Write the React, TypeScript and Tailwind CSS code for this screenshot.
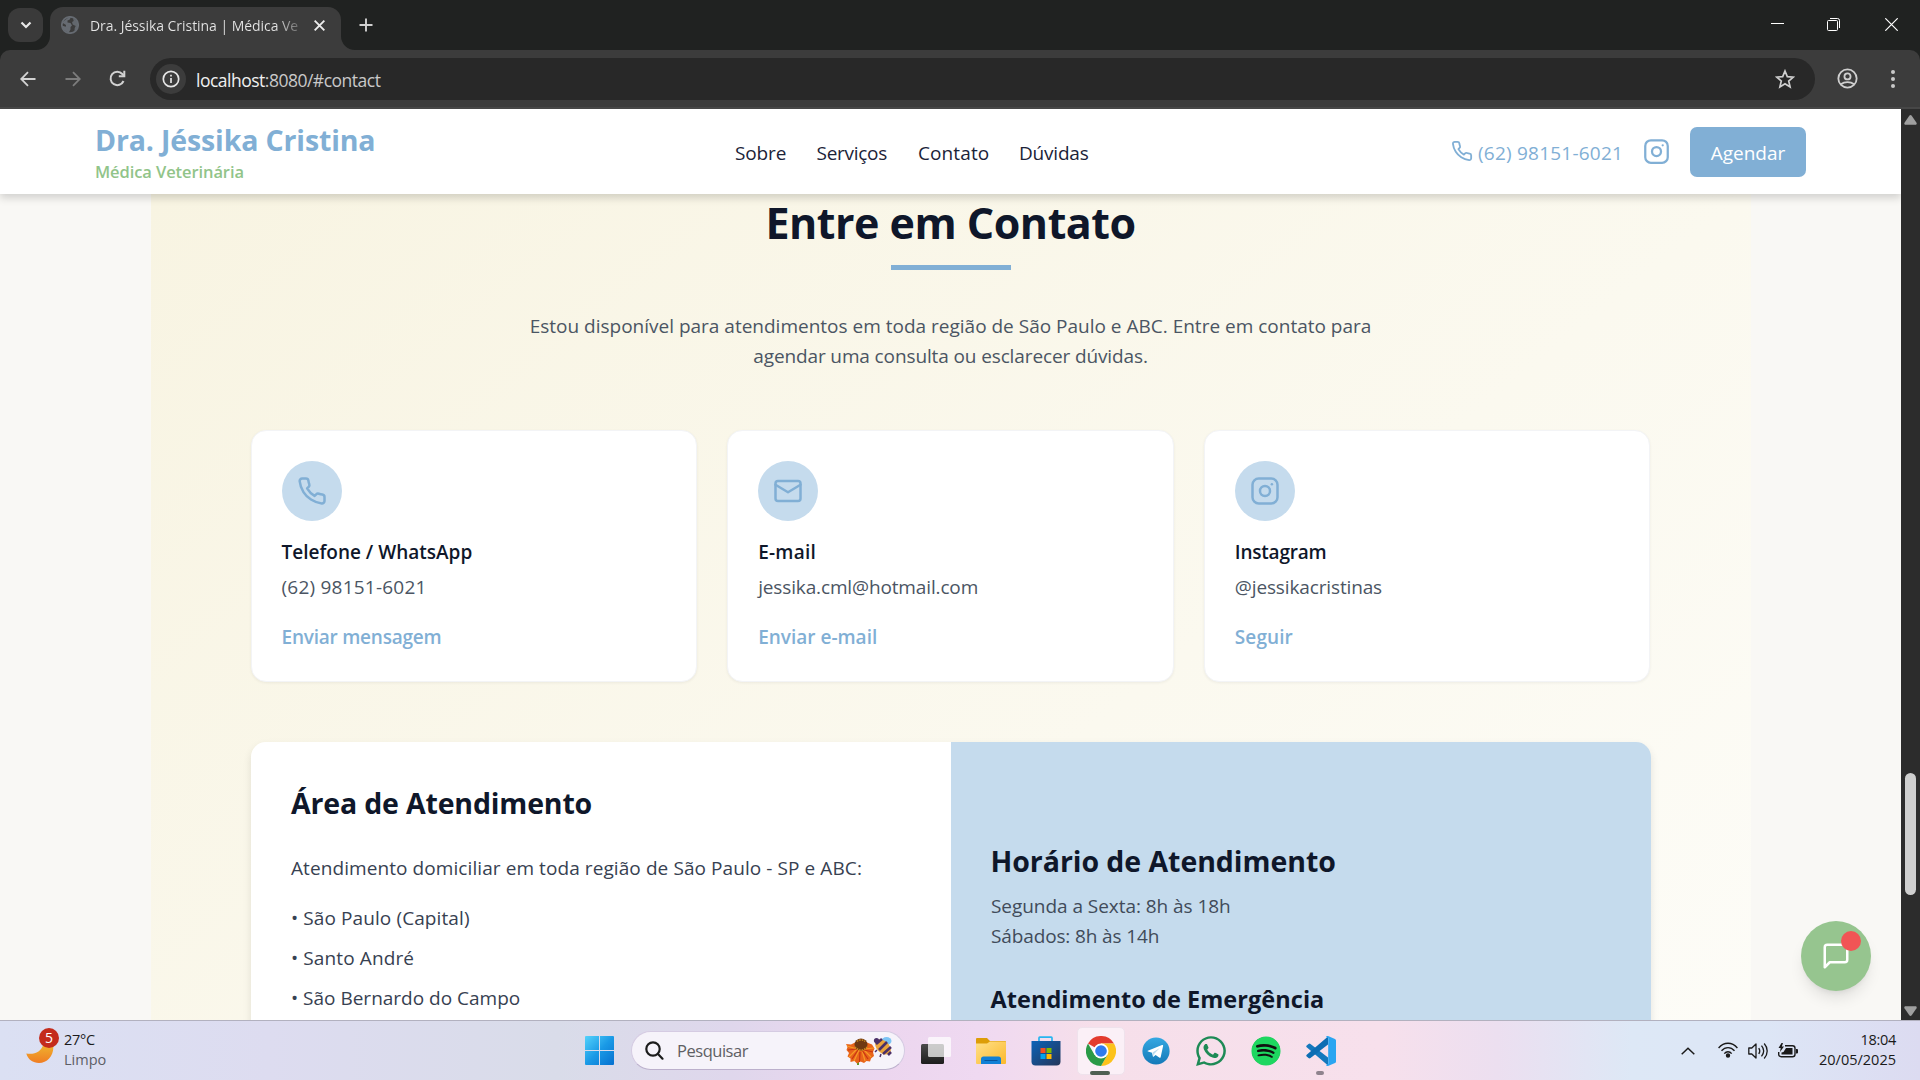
import type { ReactNode } from "react";
import { FaWhatsapp, FaSpotify } from "react-icons/fa";

type IconProps = { className?: string; stroke?: number };

function Line({ className = "", stroke = 2, children }: IconProps & { children: ReactNode }) {
  return (
    <svg viewBox="0 0 24 24" fill="none" stroke="currentColor" strokeWidth={stroke} strokeLinecap="round" strokeLinejoin="round" className={className}>
      {children}
    </svg>
  );
}

const Phone = (p: IconProps) => (
  <Line {...p}>
    <path d="M22 16.92v3a2 2 0 0 1-2.18 2 19.79 19.79 0 0 1-8.63-3.07 19.5 19.5 0 0 1-6-6 19.79 19.79 0 0 1-3.07-8.67A2 2 0 0 1 4.11 2h3a2 2 0 0 1 2 1.72 12.84 12.84 0 0 0 .7 2.81 2 2 0 0 1-.45 2.11L8.09 9.91a16 16 0 0 0 6 6l1.27-1.27a2 2 0 0 1 2.11-.45 12.84 12.84 0 0 0 2.81.7A2 2 0 0 1 22 16.92z" />
  </Line>
);
const Mail = (p: IconProps) => (
  <Line {...p}>
    <rect x="2" y="4" width="20" height="16" rx="2" />
    <path d="m2 7 10 6 10-6" />
  </Line>
);
const Instagram = (p: IconProps) => (
  <Line {...p}>
    <rect x="2" y="2" width="20" height="20" rx="5" />
    <circle cx="12" cy="12" r="4" />
    <path d="M17.5 6.5h.01" />
  </Line>
);
const Message = (p: IconProps) => (
  <Line {...p}>
    <path d="M21 15a2 2 0 0 1-2 2H7l-4 4V5a2 2 0 0 1 2-2h14a2 2 0 0 1 2 2z" />
  </Line>
);

function TabStrip() {
  return (
    <div className="flex h-[50px] bg-[#202221] pl-2">
      <div className="mt-2 flex h-[34px] w-[35px] items-center justify-center rounded-xl bg-[#3a3a3a]">
        <svg viewBox="0 0 12 8" className="h-[8px] w-[12px]" fill="none" stroke="#e8e8e8" strokeWidth="2.2"><path d="M1.5 1.5 6 6l4.500-4.500" /></svg>
      </div>
      <div className="relative ml-[7px] mt-[7px] flex h-[43px] w-[291px] items-center rounded-t-[13px] bg-[#3c3c3c] pb-[7px] pl-[11px]">
        <svg viewBox="0 0 14 14" className="absolute bottom-0 left-[-14px] size-[14px]"><path d="M14 0A14 14 0 0 1 0 14h14z" fill="#3c3c3c" /></svg>
        <svg viewBox="0 0 14 14" className="absolute bottom-0 right-[-14px] size-[14px]"><path d="M0 0a14 14 0 0 0 14 14H0z" fill="#3c3c3c" /></svg>
        <svg viewBox="0 0 18 18" className="size-[18px]">
          <circle cx="9" cy="9" r="8.2" fill="#3c3c3c" stroke="#666b72" strokeWidth="1.700" />
          <path d="M1 6.500 8 1l2 .3-1.500 2.500-2 .7 0 2 3 .5 1.500 2.500-1.500 1.500v2.500L7.500 17 2 13.500.8 9.500l4 1.200.2-1.700z" fill="#666b72" />
          <path d="M12 2.200c3 1.300 5 3.800 5 6.800 0 2.500-1.300 4.800-3.500 6.500l.2-3.500 1-2-3-1.500-.7-2.500 1.700-1z" fill="#666b72" opacity=".9" />
        </svg>
        <div className="ml-[11px] mt-[2px] w-[211px] overflow-hidden whitespace-nowrap bg-linear-to-r from-[#e6e6e6] from-88% to-[#e6e6e6]/20 bg-clip-text text-[14px] leading-5 tracking-[-0.05px] text-transparent">Dra. Jéssika Cristina | Médica Ve</div>
        <svg viewBox="0 0 10 10" className="ml-[13px] size-[11px]" stroke="#ececec" strokeWidth="1.700"><path d="m.6.6 8.800 8.800M9.400.6.6 9.400" /></svg>
      </div>
      <svg viewBox="0 0 14 14" className="ml-[18px] mt-[18px] size-[14px]" stroke="#d0d0d0" strokeWidth="1.900"><path d="M7 .5v13M.5 7h13" /></svg>
      <div className="ml-auto mr-[22px] mt-[18px] flex h-[13px] gap-[43px] text-white">
        <svg viewBox="0 0 13 13" className="size-[13px]" stroke="currentColor" shapeRendering="crispEdges"><path d="M0 5.500h13" /></svg>
        <svg viewBox="0 0 13 13" className="size-[13px]" fill="none" stroke="currentColor"><rect x=".5" y="2.500" width="10" height="10" rx="1" /><path d="M3 .5h7.500a2 2 0 0 1 2 2V10" /></svg>
        <svg viewBox="0 0 13 13" className="ml-[2px] size-[13px]" stroke="currentColor" strokeWidth="1.200"><path d="m.3.3 12.400 12.400M12.700.3.3 12.700" /></svg>
      </div>
    </div>
  );
}

function Toolbar() {
  return (
    <div className="bg-[#202221]">
      <div className="flex h-[59px] items-center rounded-t-[10px] border-b-2 border-[#474747] bg-[#3c3c3c] pl-[20px]">
        <svg viewBox="0 0 16 16" className="size-[16px]" fill="none" stroke="#d2d2d2" strokeWidth="1.800"><path d="M15.500 8H1.500M8 1.200 1.200 8 8 14.800" /></svg>
        <svg viewBox="0 0 16 16" className="ml-[29px] size-[16px]" fill="none" stroke="#7c7c7c" strokeWidth="1.800"><path d="M.5 8h14M8 1.200 14.800 8 8 14.800" /></svg>
        <svg viewBox="0 0 17 17" className="ml-[28px] size-[17px]" fill="none" stroke="#d2d2d2" strokeWidth="2"><path d="M14.500 11A6.700 6.700 0 1 1 13.300 4L15 5.900" /><path d="M15.300.8v5.400H9.800" /></svg>
        <div className="ml-[24px] flex h-[42px] w-[1665px] items-center rounded-full bg-[#282828] pl-[6px]">
          <div className="flex size-[30px] items-center justify-center rounded-full bg-[#3c3c3c]">
            <svg viewBox="0 0 18 18" className="size-[18px]" fill="none" stroke="#e6e6e6" strokeWidth="1.700"><circle cx="9" cy="9" r="7.700" /><path d="M9 8v5M9 4.700v1.900" /></svg>
          </div>
          <div className="ml-[10px] mt-[2px] text-[17.5px] leading-6 tracking-[-0.5px] text-[#c9c9c9]"><span className="text-[#f0f0f0]">localhost</span><span>:8080/#contact</span></div>
          <svg viewBox="0 0 20 20" className="ml-auto mr-[20px] size-[20px]" fill="none" stroke="#cfcfcf" strokeWidth="1.700"><path d="m10 2 2.300 5.600 6 .5-4.600 3.900 1.400 5.900L10 14.800l-5.100 3.100L6.300 12 1.700 8.100l6-.5z" /></svg>
        </div>
        <svg viewBox="0 0 22 22" className="ml-[22px] size-[21px]" fill="none" stroke="#cfcfcf" strokeWidth="1.900"><circle cx="11" cy="11" r="9.600" /><circle cx="11" cy="8.800" r="3.200" /><path d="M4 17c4-3 10-3 14 0" /></svg>
        <div className="ml-[33px] flex flex-col gap-[3px]">
          <i className="size-1 rounded-full bg-[#c9c9c9]" /><i className="size-1 rounded-full bg-[#c9c9c9]" /><i className="size-1 rounded-full bg-[#c9c9c9]" />
        </div>
      </div>
    </div>
  );
}

function Header() {
  return (
    <header className="relative z-10 flex h-[85px] shrink-0 items-center justify-between bg-white pl-[95px] pr-[95px] shadow-[0_4px_8px_rgba(0,0,0,0.16)]">
      <div className="w-[279px] whitespace-nowrap">
        <div className="mt-[5px] text-[28.5px] font-bold leading-9 tracking-[-0.142px] text-[#81afd5]">Dra. Jéssika Cristina</div>
        <div className="text-[16.500px] font-semibold leading-[28px] tracking-[-0.091px] text-[#91c489]">Médica Veterinária</div>
      </div>
      <nav className="mt-[2px] flex gap-[30px] whitespace-nowrap text-[19px] leading-[30px] text-[#1b2338]">
        <a className="w-[51px] tracking-[-0.13px]">Sobre</a>
        <a className="w-[72px] pl-[0.500px] tracking-[-0.28px]">Serviços</a>
        <a className="w-[71px] tracking-[0.100px]">Contato</a>
        <a className="w-[71px] tracking-[-0.2px]">Dúvidas</a>
      </nav>
      <div className="flex items-center whitespace-nowrap text-[#81afd5]">
        <Phone className="mt-[-2px] size-[22px]" />
        <span className="ml-[5px] mt-[2px] w-[144px] text-[19px] leading-[30px] tracking-[0.22px]">(62) 98151-6021</span>
        <Instagram className="ml-[21px] size-[27px]" />
        <button className="ml-[20px] h-[50px] w-[116px] rounded-[7px] bg-[#81afd5] pt-[3px] text-[19px] leading-[30px] text-white">Agendar</button>
      </div>
    </header>
  );
}

const cards = [
  { icon: Phone, title: "Telefone / WhatsApp", value: "(62) 98151-6021", link: "Enviar mensagem", tracking: ["", "tracking-[0.22px]", "tracking-[-0.227px]"] },
  { icon: Mail, title: "E-mail", value: "jessika.cml@hotmail.com", link: "Enviar e-mail", tracking: ["tracking-[0.227px]", "tracking-[-0.138px]", ""] },
  { icon: Instagram, title: "Instagram", value: "@jessikacristinas", link: "Seguir", tracking: ["tracking-[-0.213px]", "tracking-[-0.134px]", "tracking-[0.082px]"] },
];

function Contact() {
  return (
    <section className="mx-auto h-[1300px] w-[1600px] shrink-0 bg-linear-to-br from-[#f8f4e2] to-[#fefefc] px-[100px] pt-[4px] whitespace-nowrap">
      <h2 className="text-center text-[43px] font-bold leading-[50px] tracking-[-0.500px] text-[#0f172a]">Entre em Contato</h2>
      <div className="mx-auto mt-[17px] h-[5px] w-[120px] bg-[#81afd5]" />
      <p className="mt-[41px] text-center text-[19px] leading-[30px] text-[#4b5563]">
        <span className="block">Estou disponível para atendimentos em toda região de São Paulo e ABC. Entre em contato para</span>
        <span className="block tracking-[-0.12px]">agendar uma consulta ou esclarecer dúvidas.</span>
      </p>
      <div className="mt-[59px] grid grid-cols-3 gap-[30px]">
        {cards.map(({ icon: Icon, title, value, link, tracking }) => (
          <article key={title} className="h-[252px] rounded-[15px] border border-[#f3f4f6] bg-white p-[30px] shadow-[0_1px_3px_rgba(0,0,0,0.06)]">
            <div className="flex size-[60px] items-center justify-center rounded-full bg-[#c5dbed] text-[#81afd5]"><Icon className="size-[30px]" /></div>
            <h3 className={`mt-[16px] text-[19px] font-semibold leading-[30px] text-[#0f172a] ${tracking[0]}`}>{title}</h3>
            <p className={`mt-[5px] text-[19px] leading-[30px] text-[#4b5563] ${tracking[1]}`}>{value}</p>
            <a className={`mt-[20px] block text-[19px] font-semibold leading-[30px] text-[#81afd5] ${tracking[2]}`}>{link}</a>
          </article>
        ))}
      </div>
      <div className="mt-[60px] grid h-[560px] grid-cols-2 overflow-hidden rounded-[15px] shadow-[0_4px_8px_rgba(0,0,0,0.1)]">
        <div className="bg-white pl-[40.5px] pt-[41px] text-[19px] leading-[30px] text-[#374151]">
          <h3 className="text-[28.5px] font-bold leading-10 tracking-[-0.167px] text-[#0f172a]">Área de Atendimento</h3>
          <p className="mt-[30px] tracking-[0.083px]">Atendimento domiciliar em toda região de São Paulo - SP e ABC:</p>
          <ul className="mt-[20px] flex flex-col gap-[10px]">
            <li className="tracking-[0.100px]">• São Paulo (Capital)</li>
            <li className="tracking-[0.12px]">• Santo André</li>
            <li>• São Bernardo do Campo</li>
          </ul>
        </div>
        <div className="bg-[#c5dbed] px-[40px] pt-[99px] text-[19px] leading-[30px] text-[#414b5a]">
          <h3 className="text-[28.5px] font-bold leading-10 tracking-[-0.054px] text-[#0f172a]">Horário de Atendimento</h3>
          <p className="mt-[10px] pl-[0.500px] tracking-[-0.053px]">Segunda a Sexta: 8h às 18h</p>
          <p className="pl-[0.500px] tracking-[-0.13px]">Sábados: 8h às 14h</p>
          <h4 className="mt-[33px] text-[23.5px] font-bold tracking-[0.043px] text-[#0f172a]">Atendimento de Emergência</h4>
        </div>
      </div>
    </section>
  );
}

function Scrollbar() {
  return (
    <div className="flex w-[19px] flex-col items-center bg-[#2c2c2c]">
      <svg viewBox="0 0 13 10" className="mt-[6px] h-[10px] w-[13px]" fill="#9f9f9f"><path d="M5.300.8a1.500 1.500 0 0 1 2.400 0l4.800 7c.6 1-.1 2-1.200 2H1.700c-1.100 0-1.800-1-1.200-2z" /></svg>
      <div className="mt-[648px] h-[122px] w-[11px] rounded-full bg-[#cfcfcf]" />
      <svg viewBox="0 0 13 10" className="mt-auto mb-[4px] h-[10px] w-[13px] rotate-180" fill="#9f9f9f"><path d="M5.300.8a1.500 1.500 0 0 1 2.400 0l4.800 7c.6 1-.1 2-1.200 2H1.700c-1.100 0-1.800-1-1.200-2z" /></svg>
    </div>
  );
}

function Flower() {
  return (
    <svg viewBox="0 0 48 30" className="h-[30px] w-[48px]">
      <path d="M13 20v9" stroke="#5d9a2c" strokeWidth="2" />
      <path d="M1 8l5 .5 4-2h12l5 2 2.500 4-1.500 3.500 1 4-3 2.500-1 3-3.500-.5-2.500 2-3.500-1.500-3.500 2-2.500-2.500-4 1 0-3.500-3-2 1.500-3.500-2.500-3 1-3z" fill="#e8641a" />
      <path d="M2 10l10 3M4 21l8-8M9 25l5-11M20 25l-3-11M26 21l-8-8M29 12l-10 1" stroke="#f79a26" strokeWidth="1.200" />
      <path d="M3 14l9-1M7 23l6-9M23 23l-6-9M28 16l-9-2M14.500 26l.5-10" stroke="#c93512" strokeWidth="1.200" />
      <ellipse cx="16" cy="8.500" rx="6.500" ry="6" fill="#6f3812" />
      <path d="M10 11c3 4 9 4 12 0M12 5.500c2-2 6-2 8 0" fill="none" stroke="#c88a1f" strokeWidth="1.500" strokeDasharray="1.500 1" />
      <ellipse cx="41.500" cy="5" rx="5" ry="4" fill="#7cc4f4" />
      <ellipse cx="38" cy="11" rx="9" ry="6" transform="rotate(42 38 11)" fill="#eba43c" />
      <path d="m31 8 6-5M34 14l8-8M38 18l8-7M43 19l3-3" stroke="#4b3068" strokeWidth="2.600" />
      <circle cx="31.500" cy="4.500" r="2.600" fill="#4b3068" />
      <path d="m32 14-2 2M36 18l-1 3" stroke="#4b3068" strokeWidth="1.500" />
    </svg>
  );
}

function Slot({ children, mark }: { children: ReactNode; mark?: string }) {
  return (
    <div className="relative flex h-full w-[55px] items-center justify-center">
      {children}
      {mark && <i className={mark} />}
    </div>
  );
}

function Taskbar() {
  return (
    <div className="flex h-[60px] items-center border-t border-[#b2b1bf] bg-[linear-gradient(90deg,#dbe0f3_0%,#dddcf0_14%,#d9dce9_29%,#dfd7ec_38%,#ecd6ef_46%,#efd9f1_51%,#f6dfea_57%,#f7e0ec_72%,#ecdff0_78%,#dde8f6_85%,#dde6f6_92%,#dcdbf1_100%)]">
      <div className="relative ml-[26px] h-[40px] w-[28px]">
        <svg viewBox="0 0 28 20" className="mt-[13px] h-[20px] w-[28px]">
          <defs><linearGradient id="moon" x1="0" y1="0" x2="0" y2="1"><stop offset="0" stopColor="#efb52f" /><stop offset="1" stopColor="#f07d23" /></linearGradient></defs>
          <path d="M.3 9.500C8 11 15.500 8 17.500 0L27 0c2 10-5 19-14 19C7 19 2 15.500.3 9.500z" fill="url(#moon)" />
        </svg>
        <div className="absolute left-[13px] top-[-3px] flex size-[20px] items-center justify-center rounded-full bg-[#c42b1c] text-[14px] leading-5 text-white">5</div>
      </div>
      <div className="mt-[-1px] ml-[10px] w-[60px] text-[14.500px] leading-5">
        <div className="tracking-[-0.26px] text-[#1b1b1b]">27°C</div>
        <div className="text-[#5d5e66]">Limpo</div>
      </div>
      <svg viewBox="0 0 29 29" className="ml-[461px] size-[29px]">
        <defs><linearGradient id="win" x1="0" y1="0" x2="1" y2="1"><stop offset="0" stopColor="#54d2fb" /><stop offset=".5" stopColor="#1a9ae6" /><stop offset="1" stopColor="#0670cf" /></linearGradient></defs>
        <path d="M1 0h13v14H0V1q0-1 1-1zM15 0h13q1 0 1 1v13H15zM0 15h14v14H1q-1 0-1-1zM15 15h14v13q0 1-1 1H15z" fill="url(#win)" />
      </svg>
      <div className="ml-[17px] flex h-[39px] w-[274px] items-center rounded-full border border-b-[#bcb0cc] border-x-[#d5cbe2] border-t-[#d5cbe2] bg-[#f6f3fa] pl-[13px]">
        <svg viewBox="0 0 19 19" className="size-[19px]" fill="none" stroke="#1c1c1c" strokeWidth="2.200" strokeLinecap="round"><circle cx="8" cy="8" r="6.700" /><path d="m13 13 4.500 4.700" /></svg>
        <div className="ml-[13px] mt-px w-[75px] text-[16.500px] leading-6 tracking-[-0.47px] text-[#5f5f64]">Pesquisar</div>
        <div className="ml-auto mr-[11px]"><Flower /></div>
      </div>
      <div className="ml-[3px] flex h-full">
        <Slot>
          <svg viewBox="0 0 30 30" className="size-[30px]">
            <defs><linearGradient id="tv" x1="0" y1="0" x2="0" y2="1"><stop offset="0" stopColor="#4a4a4a" /><stop offset="1" stopColor="#1d1d1d" /></linearGradient></defs>
            <rect x="0" y="8" width="23" height="20" rx="1.500" fill="url(#tv)" />
            <rect x="7" y="1" width="23" height="20" rx="1.500" fill="#fff" opacity=".72" />
          </svg>
        </Slot>
        <Slot>
          <svg viewBox="0 0 30 30" className="size-[30px]">
            <defs><linearGradient id="fold" x1="0" y1="0" x2="1" y2="1"><stop offset="0" stopColor="#ffe08a" /><stop offset="1" stopColor="#fbb92c" /></linearGradient></defs>
            <path d="M0 3q0-1 1-1h10l3 3h15q1 0 1 1v6H0z" fill="#dd9d08" />
            <path d="M0 7.500h11l3-2h15q1 0 1 1V27q0 1-1 1H1q-1 0-1-1z" fill="url(#fold)" />
            <path d="M5 28v-5q0-2.500 2.500-2.500h15Q25 20.500 25 23v5z" fill="#1180d6" /><path d="M8.500 24.500h13" stroke="#07549b" />
          </svg>
        </Slot>
        <Slot>
          <svg viewBox="0 0 30 30" className="size-[30px]">
            <defs><linearGradient id="store" x1="0" y1="0" x2="1" y2="1"><stop offset="0" stopColor="#0b62b8" /><stop offset="1" stopColor="#253659" /></linearGradient></defs>
            <path d="M8 6V2q0-.8.8-.8h11.400q.8 0 .8.800v4" fill="none" stroke="#27b5f0" strokeWidth="1.700" />
            <path d="M.5 5h29v20.500q0 4-4 4h-21q-4 0-4-4z" fill="url(#store)" />
            <path d="M9.500 12H14.500v5h-5z" fill="#f25022" /><path d="M15.500 12h5v5h-5z" fill="#7fba00" /><path d="M9.500 18h5v5h-5z" fill="#00a4ef" /><path d="M15.500 18h5v5h-5z" fill="#ffb900" />
          </svg>
        </Slot>
        <Slot mark="absolute bottom-[5px] left-[17px] h-1 w-[20px] rounded-full bg-[#4f5f52]">
          <div className="flex h-[48px] w-[48px] items-center justify-center rounded-[5px] border border-[#efe2ec] bg-[#fbf0f7]">
            <svg viewBox="0 0 48 48" className="size-[30px]">
              <path d="M24 24 3.200 12A24 24 0 0 1 44.800 12H24z" fill="#e33b2e" />
              <path d="M24 12h20.800A24 24 0 0 1 24 48L34.400 30z" fill="#fcc21b" />
              <path d="M34.400 30 24 48A24 24 0 0 1 3.200 12l10.400 18z" fill="#2a9a47" />
              <circle cx="24" cy="24" r="12" fill="#fff" /><circle cx="24" cy="24" r="9.300" fill="#2f7bee" />
            </svg>
          </div>
        </Slot>
        <Slot>
          <svg viewBox="0 0 28 28" className="size-[28px]">
            <defs><linearGradient id="tg" x1="0" y1="0" x2="0" y2="1"><stop offset="0" stopColor="#35a8e2" /><stop offset="1" stopColor="#1479b8" /></linearGradient></defs>
            <circle cx="14" cy="14" r="13.600" fill="url(#tg)" />
            <path d="M5.800 13.800 20 8c.8-.3 1.300.2 1.100 1l-2.400 11c-.2.900-.8 1.100-1.500.6l-3.600-2.700-1.800 1.700c-.4.400-.8.300-.9-.2l-.9-3.600-3.900-1.200c-.8-.2-.8-.6-.3-.8z" fill="#fff" /><path d="m10.500 15.500 7.300-4.600-5.500 5.800-.4 2.600z" fill="#b9dbee" />
          </svg>
        </Slot>
        <Slot><FaWhatsapp className="size-[34px] text-[#1d8a55]" /></Slot>
        <Slot>
          <div className="flex size-[28px] items-center justify-center rounded-full bg-[#111]"><FaSpotify className="size-[30px] shrink-0 text-[#1ed760]" /></div>
        </Slot>
        <Slot mark="absolute bottom-[5px] left-[23px] h-1 w-2 rounded-full bg-[#8f838e]">
          <svg viewBox="0 0 30 30" className="size-[30px]">
            <path d="M.7 9.600 2.500 7.900q1-.8 2 0L22 21.500v8L.7 11.200q-.9-.8 0-1.600z" fill="#1478bd" />
            <path d="M.7 20.400l1.800 1.700q1 .8 2 0L22 8.500v-8L.7 18.800q-.9.800 0 1.600z" fill="#0c6db3" />
            <path d="M22 0l7 3q1 .5 1 1.500v21q0 1-1 1.500l-7 3c-1 .3-1.800-.3-2-1l2.200-1V2l-2.200-1c.3-.7 1-1.200 2-1z" fill="#2aa5f1" />
          </svg>
        </Slot>
      </div>
      <div className="ml-auto flex items-center text-[#1a1a1a]">
        <svg viewBox="0 0 14 8" className="h-[8px] w-[14px]" fill="none" stroke="currentColor" strokeWidth="1.500"><path d="m.7 7.300 6.300-6 6.300 6" /></svg>
        <svg viewBox="0 0 20 16" className="ml-[23px] mb-[2px] h-[16px] w-[20px]" fill="none" stroke="currentColor" strokeWidth="1.400"><path d="M.6 6C6-.3 14-.3 19.400 6M3.500 8.800c3.800-4.300 9.200-4.300 13 0M6.300 11.600c2.100-2.500 5.300-2.500 7.400 0" /><circle cx="10" cy="13.500" r="1.500" fill="currentColor" /></svg>
        <svg viewBox="0 0 20 18" className="ml-[10px] h-[18px] w-[20px]" fill="none" stroke="currentColor" strokeWidth="1.300" strokeLinejoin="round"><path d="M.8 6h3L8 2v14l-4.200-4h-3zM10.800 6c1.300 2 1.300 4 0 6M13.500 3.700c2.700 3.300 2.700 7.300 0 10.600M16.200 1.500c4 4.500 4 10.500 0 15" /></svg>
        <svg viewBox="0 0 20 16" className="ml-[10px] h-[16px] w-[20px]"><path d="M7 2.700h7.500q2.500 0 2.500 2.500v6q0 2.500-2.500 2.500H3.200Q.7 13.700.7 11.200V9" fill="none" stroke="currentColor" strokeWidth="1.400" /><path d="M8 5h6.500v6.500h-11V9.500l2-.5z" fill="currentColor" /><path d="M18 6h1q1 0 1 1v2.500q0 1-1 1h-1zM3.500 0 .5 5h2.200L2 9l4-5.500H3.800L5 0z" fill="currentColor" /></svg>
        <div className="mt-[-2px] ml-[20px] mr-[24px] w-[78px] text-right text-[14.500px] leading-5">
          <div className="tracking-[-0.3px]">18:04</div>
          <div>20/05/2025</div>
        </div>
      </div>
    </div>
  );
}

export default function App() {
  return (
    <div className="flex h-[1080px] w-[1920px] flex-col overflow-hidden font-['Open_Sans',sans-serif]">
      <TabStrip />
      <Toolbar />
      <div className="flex h-[911px] overflow-hidden">
        <main className="relative flex w-[1901px] flex-col overflow-hidden bg-[#f9f8f5]">
          <Header />
          <Contact />
          <div className="absolute left-[1801px] top-[812px] flex size-[70px] items-center justify-center rounded-full bg-[#96c58f] text-white shadow-[0_10px_15px_-3px_rgba(0,0,0,0.1),0_4px_6px_-4px_rgba(0,0,0,0.1)]">
            <Message className="size-[30px]" />
            <i className="absolute left-[40px] top-[10px] size-[20px] rounded-full bg-[#f15555]" />
          </div>
        </main>
        <Scrollbar />
      </div>
      <Taskbar />
    </div>
  );
}
